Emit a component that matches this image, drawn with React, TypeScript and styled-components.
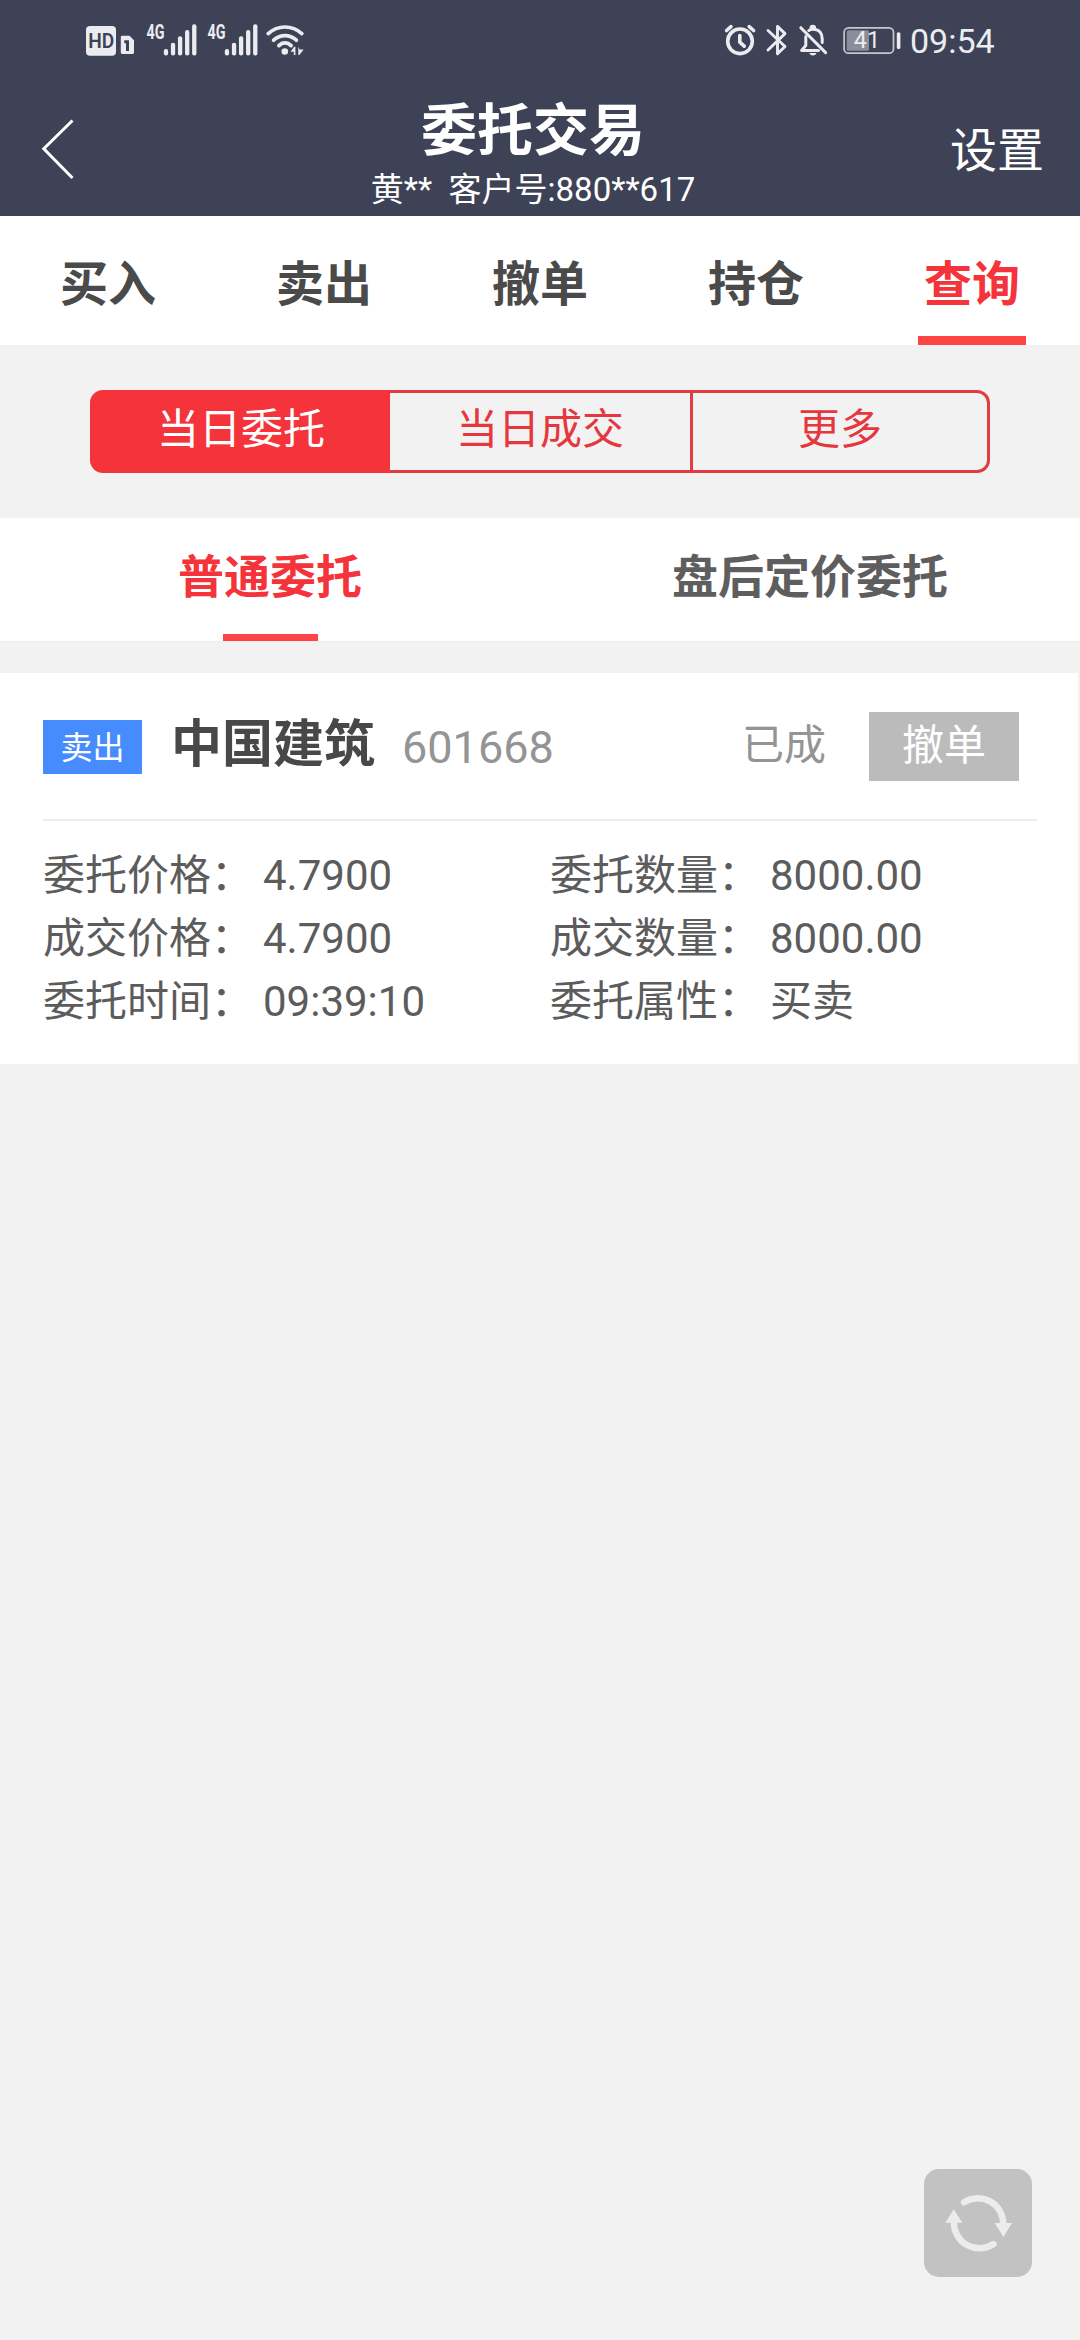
import React from "react";
import styled, { createGlobalStyle } from "styled-components";

const RED = "#f5333a";
const LINE_RED = "#df3d42";
const NAVY = "#3e4256";

const GlobalStyle = createGlobalStyle`
  * { box-sizing: border-box; }
  body {
    margin: 0;
    background: #f2f2f2;
    font-family: Roboto, "Noto Sans CJK SC", sans-serif;
  }
  button { font: inherit; border: 0; padding: 0; background: none; color: inherit; }
`;

const Screen = styled.div`
  width: 1080px;
  height: 2340px;
  overflow: hidden;
  background: #f2f2f2;
  display: flex;
  flex-direction: column;
`;

const Top = styled.header`
  height: 216px;
  flex: none;
  background: ${NAVY};
  color: #fff;
`;

const StatusBar = styled.div`
  height: 80px;
  display: flex;
  justify-content: space-between;
`;

const StatusRight = styled.div`
  display: flex;
  padding-right: 85px;
`;

const Clock = styled.span`
  width: 85px;
  line-height: 80px;
  font-size: 34px;
  color: #ebecef;
  padding-top: 1px;
`;

const NavBar = styled.div`
  height: 136px;
  display: grid;
  grid-template-columns: 300px 1fr 300px;
`;

const BackButton = styled.button`
  display: flex;
  padding: 36px 0 0 38px;
`;

const Heading = styled.div`
  display: flex;
  flex-direction: column;
  align-items: center;
  padding: 19px 14px 0 0;
  white-space: pre;
`;

const Title = styled.h1`
  margin: 0;
  font-size: 56px;
  line-height: 64px;
  font-weight: 700;
`;

const Account = styled.div`
  font-size: 33px;
  line-height: 40px;
  padding-top: 7px;
`;

const Settings = styled.button`
  font-size: 47px;
  line-height: 60px;
  padding: 5px 36px 0 0;
  text-align: right;
`;

const Tabs = styled.nav`
  flex: none;
  height: 129px;
  display: grid;
  grid-template-columns: repeat(5, 1fr);
  background: #fff;
`;

const Tab = styled.button<{ $active?: boolean }>`
  display: flex;
  flex-direction: column;
  align-items: center;
  justify-content: space-between;
  padding-top: 39px;
  font-size: 48px;
  line-height: 60px;
  font-weight: 700;
  color: ${(p) => (p.$active ? RED : "#4a4a4a")};
`;

const Underline = styled.span<{ $width: number; $height: number }>`
  width: ${(p) => p.$width}px;
  height: ${(p) => p.$height}px;
  background: #ff4444;
`;

const Segments = styled.div`
  flex: none;
  height: 83px;
  margin: 45px 90px;
  display: grid;
  grid-template-columns: 300px 303px 297px;
`;

const Segment = styled.button<{ $active?: boolean }>`
  font-size: 42px;
  line-height: 74px;
  padding-bottom: 3px;
  color: ${(p) => (p.$active ? "#fff" : "#e5383e")};
  background: ${(p) => (p.$active ? RED : "transparent")};
  border: 3px solid ${(p) => (p.$active ? RED : LINE_RED)};
  border-left-width: 0;
  &:first-child { border-radius: 13px 0 0 13px; padding-left: 5px; }
  &:last-child { border-radius: 0 13px 13px 0; }
`;

const SubTabs = styled.nav`
  flex: none;
  height: 124px;
  display: grid;
  grid-template-columns: 1fr 1fr;
  background: #fff;
  border-bottom: 1px solid #ececec;
`;

const SubTab = styled.button<{ $active?: boolean }>`
  display: flex;
  flex-direction: column;
  align-items: center;
  justify-content: space-between;
  padding-top: 29px;
  font-size: 46px;
  line-height: 60px;
  font-weight: 700;
  color: ${(p) => (p.$active ? RED : "#5e5e5e")};
`;

const Card = styled.article`
  flex: none;
  width: 1078px;
  height: 391px;
  margin-top: 31px;
  padding: 0 41px 0 43px;
  background: #fff;
`;

const CardHead = styled.div`
  height: 148px;
  display: flex;
  align-items: flex-start;
  border-bottom: 2px solid #ededed;
`;

const SideBadge = styled.span`
  width: 99px;
  height: 54px;
  margin-top: 47px;
  background: #468cff;
  color: #fff;
  font-size: 32px;
  line-height: 56px;
  text-align: center;
`;

const StockName = styled.span`
  margin: 40px 0 0 29px;
  font-size: 51px;
  line-height: 64px;
  font-weight: 700;
  color: #484848;
`;

const StockCode = styled.span`
  margin: 43px 0 0 27px;
  font-size: 45px;
  line-height: 64px;
  color: #949494;
`;

const OrderState = styled.span`
  margin: 41px 43px 0 auto;
  font-size: 42px;
  line-height: 64px;
  color: #949494;
`;

const CancelButton = styled.button`
  width: 150px;
  height: 69px;
  margin: 39px 18px 0 0;
  padding-bottom: 2px;
  font-size: 42px;
  line-height: 67px;
  color: #fff;
  background: #bbb;
`;

const Details = styled.dl`
  margin: 0;
  padding-top: 23px;
  display: grid;
  grid-template-columns: 507px 1fr;
  grid-auto-rows: 63px;
  font-size: 42px;
  line-height: 63px;
  color: #5c5c5c;
`;

const Detail = styled.div`
  display: flex;
  gap: 10px;
`;

const Term = styled.dt``;

const Value = styled.dd`
  margin: 0;
`;

const RefreshButton = styled.button`
  position: absolute;
  left: 924px;
  top: 2169px;
  width: 108px;
  height: 108px;
  border-radius: 15px;
  background: #c2c2c2;
`;

const ink = "#ebecef";

function SignalBars({ x }: { x: number }) {
  const tops = [49, 42.7, 36.3, 30, 24.3];
  return (
    <g>
      <text x={x} y="38.8" fontSize="20" fontWeight="700" fill={ink} textLength="18" lengthAdjust="spacingAndGlyphs">4G</text>
      {tops.map((top, i) => (
        <rect key={top} x={x + 17.3 + i * 7.08} y={top} width="4.3" height={55.5 - top} rx="2" fill={ink} />
      ))}
    </g>
  );
}

function NetworkIcons() {
  return (
    <svg width="320" height="80" viewBox="0 0 320 80" fontFamily="Roboto, sans-serif">
      <rect x="86" y="26" width="30" height="29.7" rx="4" fill={ink} />
      <text x="88.2" y="48.2" fontSize="20" fontWeight="600" fill={NAVY} textLength="26" lengthAdjust="spacingAndGlyphs">HD</text>
      <path d="M122.2 35.7h7.300l4.500 4.600V52.600q0 1.400-1.400 1.400H122.200q-1.400 0-1.400-1.400V37.100q0-1.400 1.400-1.400z" fill={ink} />
      <path d="M124.300 41.800H127.500V51" stroke={NAVY} strokeWidth="3" fill="none" />
      <SignalBars x={146.5} />
      <SignalBars x={207.5} />
      <g fill="none" stroke={ink} strokeWidth="3.7" strokeLinecap="round">
        <path d="M268.200 33.600Q275.500 27 285 27T301.800 33.600" />
        <path d="M273.600 40.200Q278.800 35.600 285 35.600T296.400 40.200" />
        <path d="M278.900 45.600Q281.600 42.800 285 42.800T291.100 45.600" />
      </g>
      <circle cx="284.8" cy="51.5" r="3.3" fill={ink} />
      <path d="M290.500 51.800L294.200 46.700H295.400V55H293.800V51.800zM298.300 55.300V46.700L299.600 49.500H303.600L299.600 54.700z" fill={ink} />
    </svg>
  );
}

function DeviceIcons() {
  return (
    <svg width="190" height="80" viewBox="720 0 190 80" fontFamily="Roboto, sans-serif">
      <g fill="none" stroke={ink} strokeWidth="3.6" strokeLinecap="round" strokeLinejoin="round">
        <circle cx="740" cy="41.3" r="12.3" />
        <path d="M739.800 35.500V42.200L744.200 46.200M726.600 30.500L731 26.700M749.200 26.700L753.600 30.500" />
        <path d="M768 30.500L785 46.500L777.500 53.800V26.400L785 33.600L768 50" strokeWidth="2.9" />
        <path d="M800.800 27.700L825.600 52.600" strokeWidth="3" />
        <path d="M805.800 36.500V45.600L801.600 50.400H818.500M808.800 30.500Q810.500 29.200 812.800 29.200C819.500 29.200 822.200 33.500 822.200 38.500V42.500M811 27.800Q811 26.200 812.800 26.200T814.600 27.800" strokeWidth="3" />
      </g>
      <path d="M809.200 53H816.600Q815.500 55.600 812.900 55.600T809.200 53z" fill={ink} />
      <rect x="846.7" y="30.3" width="22.3" height="20.4" rx="1.5" fill="#8b8e9a" />
      <rect x="844.1" y="27.8" width="49.4" height="25.4" rx="4.5" fill="none" stroke="#c6c8cf" strokeWidth="1.7" />
      <rect x="896.8" y="32.3" width="3.6" height="16.7" rx="1.5" fill={ink} />
      <text x="853.8" y="48.4" fontSize="23.5" fill={ink}>41</text>
    </svg>
  );
}

const tabs = ["买入", "卖出", "撤单", "持仓", "查询"];
const segments = ["当日委托", "当日成交", "更多"];
const details = [
  ["委托价格：", "4.7900"],
  ["委托数量：", "8000.00"],
  ["成交价格：", "4.7900"],
  ["成交数量：", "8000.00"],
  ["委托时间：", "09:39:10"],
  ["委托属性：", "买卖"],
];

export default function App() {
  return (
    <Screen>
      <GlobalStyle />
      <Top>
        <StatusBar>
          <NetworkIcons />
          <StatusRight>
            <DeviceIcons />
            <Clock>09:54</Clock>
          </StatusRight>
        </StatusBar>
        <NavBar>
          <BackButton aria-label="返回">
            <svg width="40" height="66" viewBox="0 0 40 66">
              <path d="M34.500 4.500L5.800 32.700L34.500 62" fill="none" stroke="#fff" strokeWidth="3" />
            </svg>
          </BackButton>
          <Heading>
            <Title>委托交易</Title>
            <Account>{"黄**  客户号:880**617"}</Account>
          </Heading>
          <Settings>设置</Settings>
        </NavBar>
      </Top>
      <Tabs>
        {tabs.map((label, i) => (
          <Tab key={label} $active={i === 4}>
            {label}
            {i === 4 && <Underline $width={108} $height={9} />}
          </Tab>
        ))}
      </Tabs>
      <Segments>
        {segments.map((label, i) => (
          <Segment key={label} $active={i === 0}>{label}</Segment>
        ))}
      </Segments>
      <SubTabs>
        <SubTab $active>
          普通委托
          <Underline $width={95} $height={7} />
        </SubTab>
        <SubTab>盘后定价委托</SubTab>
      </SubTabs>
      <Card>
        <CardHead>
          <SideBadge>卖出</SideBadge>
          <StockName>中国建筑</StockName>
          <StockCode>601668</StockCode>
          <OrderState>已成</OrderState>
          <CancelButton>撤单</CancelButton>
        </CardHead>
        <Details>
          {details.map(([term, value]) => (
            <Detail key={term}>
              <Term>{term}</Term>
              <Value>{value}</Value>
            </Detail>
          ))}
        </Details>
      </Card>
      <RefreshButton aria-label="刷新">
        <svg width="108" height="108" viewBox="0 0 108 108">
          <g fill="none" stroke="#ececec" strokeWidth="6.4" strokeLinecap="round">
            <path d="M40 33.300A25.500 25.500 0 0 1 79.300 55" />
            <path d="M69.500 75A25.500 25.500 0 0 1 29.900 53" />
          </g>
          <path d="M70.700 54H88L79.500 68zM21.300 53.800H38.400L29.800 40.300z" fill="#ececec" />
        </svg>
      </RefreshButton>
    </Screen>
  );
}
